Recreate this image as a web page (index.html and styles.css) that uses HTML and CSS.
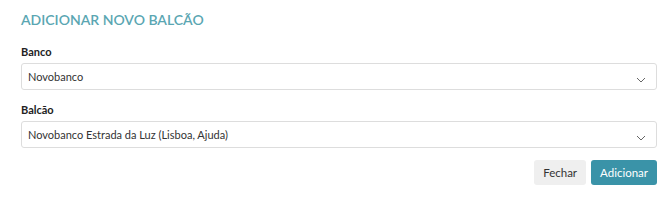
FILE: index.html
```html
<!DOCTYPE html>
<html lang="pt-PT">
<head>
    <meta charset="UTF-8">
    <title>Adicionar novo balcão</title>
    <link rel="stylesheet" href="styles.css">
</head>
<body>
    <div class="modal">
        <h3 class="modal-title">ADICIONAR NOVO BALCÃO</h3>
        <div class="campo">
            <label for="banco">Banco</label>
            <div class="select">
                <span>Novobanco</span>
                <svg class="seta" width="10" height="6" viewBox="0 0 10 6"><path d="M1 1 L5 5 L9 1" fill="none" stroke="#666" stroke-width="1"/></svg>
            </div>
        </div>
        <div class="campo">
            <label for="balcao">Balcão</label>
            <div class="select">
                <span>Novobanco Estrada da Luz (Lisboa, Ajuda)</span>
                <svg class="seta" width="10" height="6" viewBox="0 0 10 6"><path d="M1 1 L5 5 L9 1" fill="none" stroke="#666" stroke-width="1"/></svg>
            </div>
        </div>
        <div class="acoes">
            <button class="btn btn-fechar">Fechar</button>
            <button class="btn btn-adicionar">Adicionar</button>
        </div>
    </div>
</body>
</html>
```

FILE: styles.css
```css
* {
    margin: 0;
    padding: 0;
    box-sizing: border-box;
}

body {
    font-family: Lato, 'Open Sans', sans-serif;
    background: #fff;
    color: #333;
}

.modal {
    padding: 12px 13px 0 21px;
}

.modal-title {
    color: #5aa6b2;
    font-size: 14px;
    font-weight: 600;
    line-height: 16px;
    margin-bottom: 17px;
}

.campo {
    margin-bottom: 13px;
}

.campo label {
    display: block;
    font-size: 11px;
    font-weight: bold;
    color: #222;
    line-height: 14px;
    margin-bottom: 4px;
}

.select {
    display: flex;
    align-items: center;
    justify-content: space-between;
    height: 27px;
    padding: 0 10px 0 6px;
    border: 1px solid #ddd;
    border-radius: 3px;
    font-size: 11px;
    color: #333;
}

.seta {
    margin-top: 6px;
}

.acoes {
    display: flex;
    justify-content: flex-end;
    gap: 5px;
    margin-top: -1px;
}

.btn {
    height: 25px;
    border: none;
    border-radius: 3px;
    font-family: inherit;
    font-size: 11.5px;
    padding: 0 9px;
}

.btn-fechar {
    background: #efefef;
    color: #333;
}

.btn-adicionar {
    background: #3a93a8;
    color: #fff;
}
```
